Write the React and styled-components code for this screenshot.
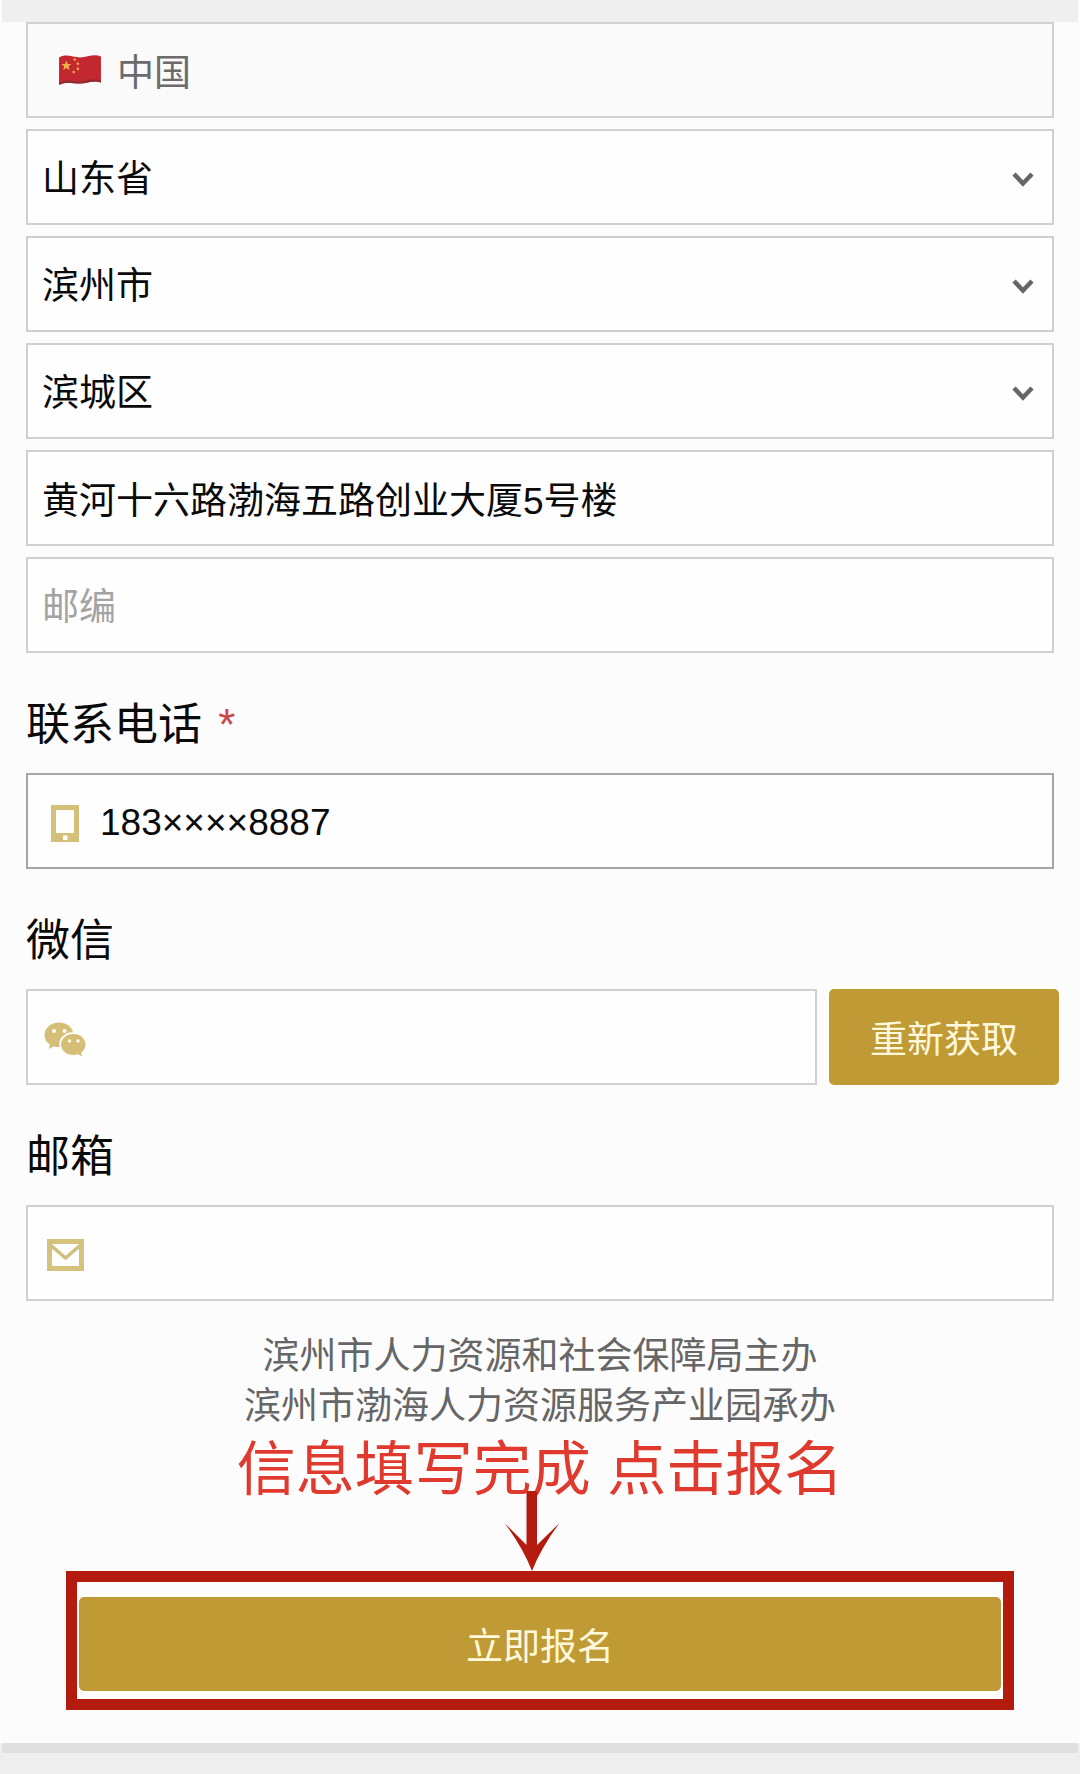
import React, { useState } from "react";
import styled, { createGlobalStyle } from "styled-components";

const GlobalStyle = createGlobalStyle`
  * {
    box-sizing: border-box;
  }
  body {
    margin: 0;
    background: #efefef;
    color: #0a0a0a;
    font-family: "Liberation Sans", "Noto Sans CJK SC", sans-serif;
    font-size: 37px;
  }
  input, select, button {
    font: inherit;
    color: inherit;
  }
`;

const Page = styled.div`
  padding-top: 22px;
  border: 0 solid #fdfdfd;
  border-width: 0 2px;
`;

const Form = styled.form`
  background: #fdfcfd;
  padding: 0 24px 33px;
  box-shadow: 0 10px 0 #e0e0e0;
  margin-bottom: 31px;
`;

const Stack = styled.div`
  display: flex;
  flex-direction: column;
  gap: 11px;
`;

const Field = styled.div`
  display: flex;
  align-items: center;
  flex: 1;
  min-width: 0;
  min-height: 96px;
  border: 2px solid ${({ $active }) => ($active ? "#a6a6a6" : "#d0d0d0")};
  background: ${({ $disabled }) => ($disabled ? "#fafafa" : "#fefefe")};
  color: ${({ $disabled }) => ($disabled ? "#6b6b6b" : "inherit")};
  padding: 0 14px;
`;

const IconField = styled(Field)`
  padding-top: 4px;
`;

const TextInput = styled.input`
  flex: 1;
  min-width: 0;
  height: 88px;
  padding: 0;
  border: none;
  outline: none;
  background: transparent;
  &::placeholder {
    color: #a3a3a3;
    opacity: 1;
  }
  &:placeholder-shown {
    padding-top: 6px;
  }
`;

const SelectField = styled(Field)`
  display: grid;
  padding: 0;
  svg {
    grid-area: 1 / 1;
    justify-self: end;
    margin: 4px 18px 0 0;
    pointer-events: none;
  }
`;

const Select = styled.select`
  grid-area: 1 / 1;
  width: 100%;
  height: 92px;
  padding: 4px 60px 0 14px;
  border: none;
  outline: none;
  appearance: none;
  background: transparent;
`;

const FlagSlot = styled.span`
  display: flex;
  padding: 0 15px 0 16px;
`;

const IconSlot = styled.span`
  display: flex;
  justify-content: center;
  width: 46px;
  margin-right: 12px;
`;

const Label = styled.label`
  display: block;
  margin: 42px 0 18px;
  font-size: 44px;
  line-height: 60px;
`;

const Required = styled.span`
  margin-left: 4px;
  color: #c8494b;
  line-height: 1;
`;

const WechatRow = styled.div`
  display: flex;
  gap: 12px;
  margin-right: -5px;
`;

const Button = styled.button`
  border: none;
  border-radius: 5px;
  background: #c09b35;
  color: #fff8dc;
  cursor: pointer;
`;

const RefreshButton = styled(Button)`
  width: 230px;
`;

const SubmitButton = styled(Button)`
  display: block;
  width: 100%;
  height: 94px;
`;

const Organizers = styled.p`
  margin: 31px 0 0;
  color: #666;
  line-height: 50px;
  text-align: center;
`;

const Hint = styled.p`
  margin: 0;
  color: #e03a2f;
  font-size: 59px;
  line-height: 76px;
  text-align: center;
`;

const Pointer = styled.div`
  display: flex;
  justify-content: center;
  margin-top: -17px;
  padding-right: 16px;
`;

const Highlight = styled.div`
  margin: 0 40px;
  padding: 15px 2px 8px;
  border: 11px solid #b31b0e;
`;

const Flag = () => (
  <svg width="44" height="32" viewBox="0 0 42 30">
    <path
      d="M1 3C8-1 14 3 21 3S34-1 41 2V27C34 24 28 28 21 28S8 26 1 29Z"
      fill="#c3272f"
    />
    <path
      d="M1 27C8 24 14 26 21 26S34 22 41 25V27C34 24 28 28 21 28S8 26 1 29Z"
      fill="#8f2a30"
    />
    <path
      d="M8 6l1.300 3.200 3.500.1-2.700 2.200.9 3.500-3-1.900-3 1.900.9-3.500-2.700-2.200 3.500-.1z"
      fill="#f3b04b"
    />
    <g fill="#eda244">
      <circle cx="16" cy="5" r="1.300" />
      <circle cx="19" cy="9" r="1.300" />
      <circle cx="19" cy="14" r="1.300" />
      <circle cx="15" cy="17" r="1.300" />
    </g>
  </svg>
);

const Chevron = () => (
  <svg width="22" height="16" viewBox="0 0 22 16">
    <path d="M2 3L11 12.500L20 3" fill="none" stroke="#666" strokeWidth="4.500" />
  </svg>
);

const PhoneIcon = () => (
  <svg width="28" height="37" viewBox="0 0 28 37">
    <path
      d="M0 0H28V37H0ZM5 5V28H23V5ZM12 30.500V35H16.500V30.500Z"
      fill="#d5c07a"
      fillRule="evenodd"
    />
  </svg>
);

const WechatIcon = () => (
  <svg width="42" height="35" viewBox="0 0 42 35">
    <path
      d="M15 .5C6.800.5.500 6 .500 13c0 4 2 7.300 5.400 9.500L5 27l5-2.800c1.800.6 3.600.9 5.600.9C14 17 19.500 10.500 29 10.300 27.800 4.500 22 .5 15 .5Z"
      fill="#d5bf76"
    />
    <path
      d="M29.500 12C22.300 12 17 16.700 17 22.500S22.300 33 29.500 33c1.700 0 3.200-.3 4.700-.8L38 34.500 37.300 30.500c2.700-2 4.200-4.700 4.200-8C41.500 16.700 36.500 12 29.500 12Z"
      fill="#d5bf76"
    />
    <g fill="#fffdf0">
      <circle cx="10" cy="9" r="2" />
      <circle cx="20.500" cy="9" r="2" />
      <circle cx="25.500" cy="19" r="1.700" />
      <circle cx="34" cy="19" r="1.700" />
    </g>
  </svg>
);

const MailIcon = () => (
  <svg width="37" height="32" viewBox="0 0 37 32">
    <path d="M0 0H37V32H0ZM5 5V27H32V5Z" fill="#d5c27c" fillRule="evenodd" />
    <path d="M4 6.500L18.500 19L33 6.500" fill="none" stroke="#d0bf80" strokeWidth="3.500" />
  </svg>
);

const Arrow = () => (
  <svg width="56" height="80" viewBox="0 0 56 80">
    <path
      d="M22.500 2Q22.500 0 24.500 0H31Q33 0 33 2V54L55.500 32Q37 57 28 80Q19 57 .5 32L22.500 54Z"
      fill="#b31b0e"
    />
  </svg>
);

const regions = [
  { name: "省份", options: ["山东省"] },
  { name: "城市", options: ["滨州市"] },
  { name: "区县", options: ["滨城区"] },
];

const App = () => {
  const [address, setAddress] = useState("黄河十六路渤海五路创业大厦5号楼");
  const [phone, setPhone] = useState("183××××8887");

  return (
    <>
      <GlobalStyle />
      <Page>
        <Form onSubmit={(e) => e.preventDefault()}>
          <Stack>
            <Field $disabled>
              <FlagSlot>
                <Flag />
              </FlagSlot>
              <TextInput aria-label="国家" value="中国" readOnly />
            </Field>
            {regions.map(({ name, options }) => (
              <SelectField key={name}>
                <Select aria-label={name}>
                  {options.map((option) => (
                    <option key={option}>{option}</option>
                  ))}
                </Select>
                <Chevron />
              </SelectField>
            ))}
            <Field>
              <TextInput
                aria-label="详细地址"
                value={address}
                onChange={(e) => setAddress(e.target.value)}
              />
            </Field>
            <Field>
              <TextInput aria-label="邮编" placeholder="邮编" />
            </Field>
          </Stack>

          <Label htmlFor="phone">
            联系电话<Required> *</Required>
          </Label>
          <IconField $active>
            <IconSlot>
              <PhoneIcon />
            </IconSlot>
            <TextInput
              id="phone"
              type="tel"
              value={phone}
              onChange={(e) => setPhone(e.target.value)}
            />
          </IconField>

          <Label htmlFor="wechat">微信</Label>
          <WechatRow>
            <IconField>
              <IconSlot>
                <WechatIcon />
              </IconSlot>
              <TextInput id="wechat" />
            </IconField>
            <RefreshButton type="button">重新获取</RefreshButton>
          </WechatRow>

          <Label htmlFor="email">邮箱</Label>
          <IconField>
            <IconSlot>
              <MailIcon />
            </IconSlot>
            <TextInput id="email" type="email" />
          </IconField>

          <Organizers>
            滨州市人力资源和社会保障局主办
            <br />
            滨州市渤海人力资源服务产业园承办
          </Organizers>
          <Hint>信息填写完成 点击报名</Hint>
          <Pointer>
            <Arrow />
          </Pointer>
          <Highlight>
            <SubmitButton type="submit">立即报名</SubmitButton>
          </Highlight>
        </Form>
      </Page>
    </>
  );
};

export default App;
